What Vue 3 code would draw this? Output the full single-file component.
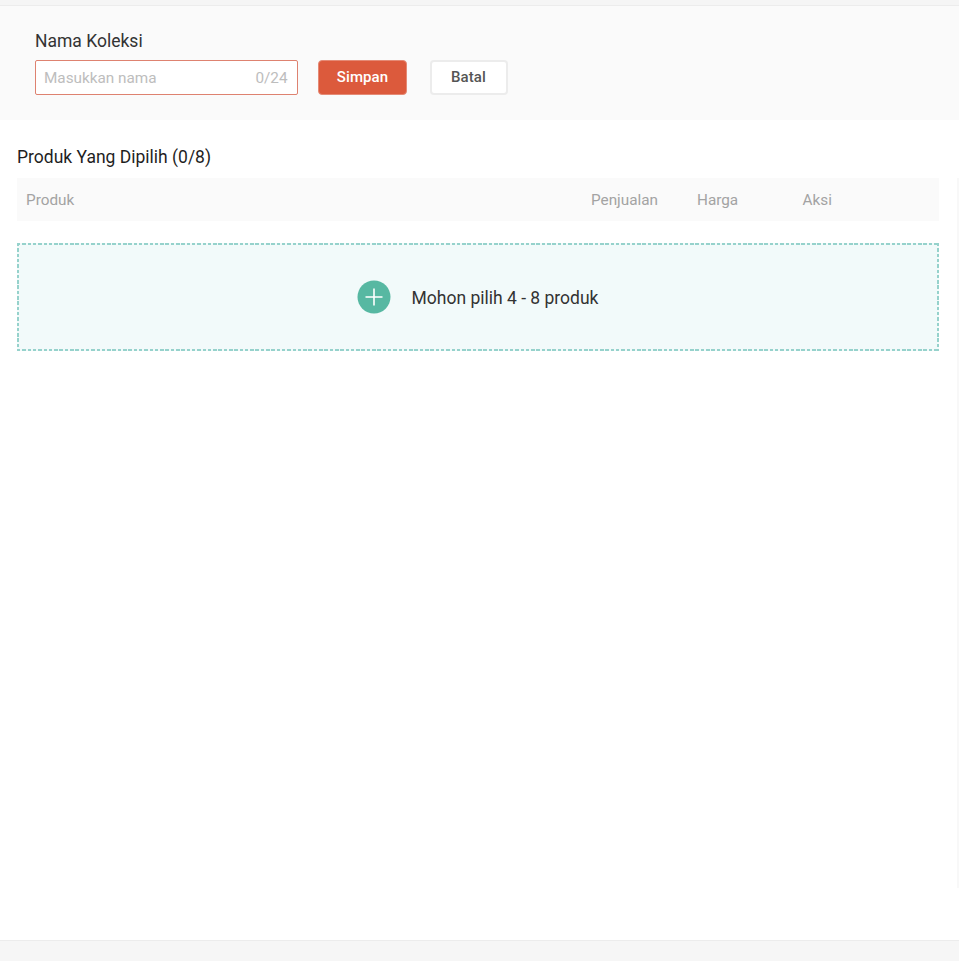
<script setup>
const columns = [
  { label: 'Penjualan', cls: 'col-sales' },
  { label: 'Harga', cls: 'col-price' },
  { label: 'Aksi', cls: 'col-action' },
]
</script>

<template>
  <div class="page">
    <div class="top-strip"></div>
    <section class="name-panel">
      <div class="label">Nama Koleksi</div>
      <div class="form-row">
        <div class="input">
          <span class="placeholder">Masukkan nama</span>
          <span class="count">0/24</span>
        </div>
        <button class="btn btn-primary">Simpan</button>
        <button class="btn btn-default">Batal</button>
      </div>
    </section>
    <main class="content">
      <div class="track"></div>
      <h2 class="title">Produk Yang Dipilih (0/8)</h2>
      <div class="table-head">
        <span class="col-product">Produk</span>
        <span v-for="c in columns" :key="c.label" :class="c.cls">{{ c.label }}</span>
      </div>
      <div class="dropzone">
        <span class="plus">
          <svg width="34" height="34" viewBox="0 0 34 34">
            <circle cx="17" cy="17" r="16.5" fill="#57b8a2" />
            <path d="M17 8.5v17M8.5 17h17" stroke="#fff" stroke-width="1.6" fill="none" />
          </svg>
        </span>
        <span class="drop-text">Mohon pilih 4 - 8 produk</span>
      </div>
    </main>
    <div class="footer"></div>
  </div>
</template>

<style>
html, body { margin: 0; background: #fff; }
</style>

<style scoped>
.page {
  width: 959px;
  height: 961px;
  display: flex;
  flex-direction: column;
  overflow: hidden;
  font-family: Roboto, "Liberation Sans", sans-serif;
  background: #fff;
}
.top-strip {
  height: 5px;
  background: #f5f5f5;
  border-bottom: 1px solid #ececec;
}
.name-panel {
  height: 114px;
  box-sizing: border-box;
  padding: 24px 35px 0;
  background: #fafafa;
}
.label {
  font-size: 17.5px;
  line-height: 22px;
  color: #333;
  margin-bottom: 8px;
}
.form-row {
  display: flex;
  align-items: flex-start;
}
.input {
  width: 262.5px;
  height: 35px;
  box-sizing: border-box;
  padding: 0 9px 0 8px;
  display: flex;
  align-items: center;
  justify-content: space-between;
  background: #fff;
  border: 1px solid #de8270;
  border-radius: 2px;
  font-size: 15.3px;
  color: #bdbdbd;
}
.btn {
  height: 35px;
  box-sizing: border-box;
  padding: 0 0 1px;
  border-radius: 4px;
  font-family: inherit;
  font-size: 15px;
  font-weight: 500;
  letter-spacing: 0.1px;
}
.btn-primary {
  width: 89px;
  margin-left: 20.5px;
  background: #dc5a3c;
  border: 1px solid #e58a75;
  color: #fff;
}
.btn-default {
  width: 78px;
  margin-left: 22.5px;
  background: #fff;
  border: 2px solid #ececec;
  color: #555;
}
.content {
  position: relative;
  flex: 1;
  padding: 26px 20px 0 17px;
}
.track {
  position: absolute;
  top: 58px;
  right: 0;
  width: 2px;
  height: 710px;
  background: #f8f8f8;
}
.title {
  margin: 0 0 10px;
  font-size: 17.5px;
  line-height: 22px;
  font-weight: 400;
  color: #1f1f1f;
}
.table-head {
  height: 43px;
  display: flex;
  align-items: center;
  padding-left: 9px;
  background: #fafafa;
  font-size: 15.3px;
  color: #a3a3a3;
}
.col-product { width: 565px; }
.col-sales { width: 106px; }
.col-price { width: 105.5px; }
.col-action { flex: 1; }
.dropzone {
  height: 108px;
  box-sizing: border-box;
  margin-top: 22px;
  display: flex;
  align-items: center;
  padding-left: 340px;
  padding-bottom: 1px;
  background-color: #f2fafa;
  background-image:
    repeating-linear-gradient(90deg, #96d2cc 0 3.5px, transparent 3.5px 5.3px),
    repeating-linear-gradient(90deg, #96d2cc 0 3.5px, transparent 3.5px 5.3px),
    repeating-linear-gradient(180deg, #96d2cc 0 3.5px, transparent 3.5px 5.3px),
    repeating-linear-gradient(180deg, #96d2cc 0 3.5px, transparent 3.5px 5.3px);
  background-size: 100% 2px, 100% 2px, 2px 100%, 2px 100%;
  background-position: 0 0, 0 100%, 0 0, 100% 0;
  background-repeat: no-repeat;
}
.plus {
  display: flex;
  width: 34px;
  height: 34px;
}
.drop-text {
  margin-left: 20.5px;
  margin-top: 2px;
  font-size: 17.5px;
  color: #333;
}
.footer {
  height: 20px;
  background: #f6f6f6;
  border-top: 1px solid #ececec;
}
</style>
